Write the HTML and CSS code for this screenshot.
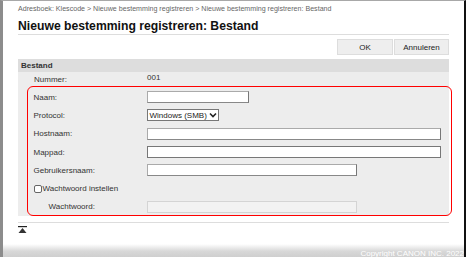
FILE: index.html
```html
<!DOCTYPE html>
<html lang="nl">
<head>
    <meta charset="UTF-8">
    <meta name="viewport" content="width=device-width, initial-scale=1.0">
    <title>Nieuwe bestemming registreren: Bestand</title>
    <link rel="stylesheet" href="styles.css">
</head>
<body>
    <div class="frame">
        <div class="page">
            <div class="breadcrumb">Adresboek: Klescode &gt; Nieuwe bestemming registreren &gt; Nieuwe bestemming registreren: Bestand</div>
            <h1>Nieuwe bestemming registreren: Bestand</h1>
            <div class="actions">
                <button>OK</button>
                <button>Annuleren</button>
            </div>

            <div class="section-title">Bestand</div>
            <div class="panel">
                <div class="row">
                    <label>Nummer:</label>
                    <span class="value">001</span>
                </div>
                <div class="highlight">
                    <div class="row">
                        <label>Naam:</label>
                        <input type="text" class="w-short">
                    </div>
                    <div class="row">
                        <label>Protocol:</label>
                        <div class="select">Windows (SMB)
                            <svg width="8" height="6" viewBox="0 0 8 6"><path d="M1 1.5 L4 4.5 L7 1.5" fill="none" stroke="#222" stroke-width="1.6"/></svg>
                        </div>
                    </div>
                    <div class="row">
                        <label>Hostnaam:</label>
                        <input type="text" class="w-long">
                    </div>
                    <div class="row">
                        <label>Mappad:</label>
                        <input type="text" class="w-long dark">
                    </div>
                    <div class="row">
                        <label>Gebruikersnaam:</label>
                        <input type="text" class="w-mid">
                    </div>
                    <div class="row">
                        <span class="check"><span class="box"></span>Wachtwoord instellen</span>
                    </div>
                    <div class="row">
                        <label class="indent">Wachtwoord:</label>
                        <input type="text" class="w-mid" disabled>
                    </div>
                </div>
            </div>

            <div class="bottom">
                <svg width="9" height="7" viewBox="0 0 9 7"><rect x="0" y="0" width="9" height="1.2" fill="#222"/><path d="M4.5 2 L8.5 7 L0.5 7 Z" fill="#333"/></svg>
            </div>
        </div>
        <div class="footer">Copyright CANON INC. 2022</div>
    </div>
</body>
</html>
```

FILE: styles.css
```css
html, body {
    margin: 0;
    padding: 0;
    background-color: #fff;
    font-family: "Liberation Sans", Arial, sans-serif;
    color: #333;
}
.frame {
    height: 256px;
    width: 461px;
    border-top: 1px solid #a8a8a8;
    border-left: 3px solid #8c8c8c;
    border-right: 2px solid #111;
    position: relative;
    overflow: hidden;
}
.page {
    padding: 0 15px;
}
.breadcrumb {
    font-size: 7.1px;
    color: #666;
    padding-top: 4px;
    height: 12px;
    white-space: nowrap;
}
h1 {
    margin: 0;
    font-size: 12.2px;
    color: #111;
    height: 17px;
    line-height: 18px;
    border-bottom: 1px solid #ddd;
}
.actions {
    display: flex;
    justify-content: flex-end;
    gap: 1px;
    padding-top: 4px;
    height: 16px;
}
.actions button {
    font-family: "Liberation Sans", Arial, sans-serif;
    font-size: 8px;
    color: #222;
    background-color: #eee;
    border: 1px solid #ddd;
    padding: 0;
    height: 16px;
}
.actions button:first-child {
    width: 56px;
}
.actions button:last-child {
    width: 55px;
}
.section-title {
    margin-top: 4px;
    background-color: #ddd;
    font-size: 8px;
    font-weight: bold;
    color: #333;
    height: 13px;
    line-height: 13px;
    padding-left: 3px;
}
.panel {
    background-color: #ededed;
    padding: 1px 0 0 9px;
    height: 143px;
}
.row {
    display: flex;
    align-items: center;
    height: 18.3px;
    font-size: 8px;
}
.row label {
    width: 113px;
    flex-shrink: 0;
}
.panel > .row {
    padding-left: 7px;
    height: 13px;
}
.panel > .row .value {
    margin-top: -4px;
}
.highlight {
    border: 1.5px solid #f00;
    border-radius: 6px;
    margin-right: -3px;
    padding: 1px 0 0 5.5px;
    height: 127px;
}
input {
    height: 12px;
    box-sizing: border-box;
    border: 1px solid #aaa;
    border-right-color: #777;
    border-bottom-color: #888;
    background-color: #fff;
    padding: 0;
    margin: 0;
}
input.dark {
    border-color: #777;
}
input:disabled {
    background-color: #f2f2f2;
    border-color: #d4d4d4;
}
.w-short {
    width: 102px;
}
.w-long {
    width: 294px;
}
.w-mid {
    width: 210px;
}
.select {
    display: flex;
    align-items: center;
    gap: 2px;
    height: 12px;
    box-sizing: border-box;
    border: 1px solid #777;
    background-color: #fff;
    padding: 0 1px 0 2px;
    font-size: 8px;
    color: #222;
}
.check {
    display: flex;
    align-items: center;
    gap: 1px;
}
.check .box {
    width: 8px;
    height: 8px;
    box-sizing: border-box;
    border: 1px solid #666;
    border-radius: 2px;
    background-color: #fff;
}
.indent {
    box-sizing: border-box;
    padding-left: 15px;
}
.bottom {
    margin-top: 6px;
    border-top: 1px solid #ddd;
    padding-top: 3px;
    height: 10px;
}
.bottom svg {
    display: block;
}
.footer {
    position: absolute;
    left: 0;
    right: 0;
    bottom: 0;
    height: 13px;
    background: linear-gradient(#fff, #d8d8d8 55%, #cfcfcf);
    color: #fff;
    font-size: 8px;
    text-align: right;
    line-height: 20px;
}
```
